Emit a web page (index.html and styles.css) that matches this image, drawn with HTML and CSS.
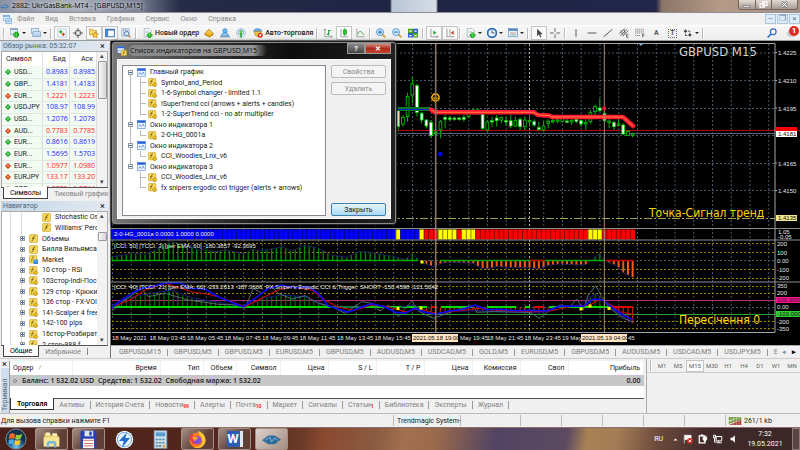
FILE: index.html
```html
<!DOCTYPE html>
<html lang="ru">
<head>
<meta charset="utf-8">
<title>2882: UkrGasBank-MT4 - [GBPUSD,M15]</title>
<link rel="stylesheet" href="styles.css">
</head>
<body>
<svg class="sprite" aria-hidden="true">
  <symbol id="fx" viewBox="0 0 16 16"><rect x="1" y="1" width="14" height="14" rx="1" fill="#f6d95c" stroke="#c59a1e"/><path d="M11 4c-3-1-3 1-3.500 4S6 12.500 4.500 12M5.500 7.500h4.500" fill="none" stroke="#6b4d00" stroke-width="1.500"/></symbol>
  <symbol id="fxc" viewBox="0 0 16 16"><rect x="1" y="1" width="13" height="13" rx="1" fill="#f6d95c" stroke="#c59a1e"/><path d="M9 3.500c-3-1-3 1-3.500 4S4.500 11 3.500 11M4 6.500h4" fill="none" stroke="#6b4d00" stroke-width="1.200"/><path d="M12 8l4 4-4 4-4-4z" fill="#f0c020" stroke="#8b6800"/></symbol>
  <symbol id="fxm" viewBox="0 0 16 16"><rect x="1" y="1" width="13" height="13" rx="1" fill="#f6d95c" stroke="#c59a1e"/><path d="M9 3.500c-3-1-3 1-3.500 4S4.500 11 3.500 11" fill="none" stroke="#6b4d00" stroke-width="1.200"/><path d="M8 8h8v8H8z" fill="#2f86e8"/><path d="M10 10c1 2 3 2 4 0" stroke="#fff" fill="none"/></symbol>
  <symbol id="win" viewBox="0 0 16 16"><rect x="1" y="1" width="14" height="14" fill="#f4f9ff" stroke="#3c78dc"/><path d="M1 1h14v4H1z" fill="#2b62d9"/><path d="M3 12l2-4 3 4 3-5 2 5" fill="none" stroke="#4c88e4" stroke-width="1.300"/></symbol>
  <symbol id="up" viewBox="0 0 10 10"><path d="M5 0l5 5-5 5-5-5z" fill="#16992b"/><path d="M5 2l2.500 2.500L5 7 2.500 4.500z" fill="#6ce070"/></symbol>
  <symbol id="down" viewBox="0 0 10 10"><path d="M5 0l5 5-5 5-5-5z" fill="#cf3b12"/><path d="M5 2l2.500 2.500L5 7 2.500 4.500z" fill="#ff9a58"/></symbol>
  <symbol id="newchart" viewBox="0 0 16 16"><rect x="1" y="1" width="11" height="9" fill="#e8f2fb" stroke="#7d9bb8"/><path d="M1 2h11" stroke="#7d9bb8" stroke-width="2"/><path d="M10 6v9M5.500 10.500h9" stroke="#108a10" stroke-width="5"/><path d="M10 7v7M6.500 10.500h7" stroke="#3ed43e" stroke-width="2.500"/></symbol>
  <symbol id="profiles" viewBox="0 0 16 16"><rect x="1" y="1" width="11" height="8" fill="#d7e9f9" stroke="#6d93b8"/><rect x="3" y="6" width="12" height="8" fill="#b7d4ee" stroke="#6d93b8"/><path d="M4 8h10" stroke="#fff"/></symbol>
  <symbol id="watch" viewBox="0 0 16 16"><rect x="1.500" y="1.500" width="13" height="13" fill="#fdfefe" stroke="#8bb4d8"/><path d="M6 3l3 3-3 3-3-3z" fill="#28a838"/><path d="M10 7l3 3-3 3-3-3z" fill="#dd4b20"/></symbol>
  <symbol id="cross" viewBox="0 0 16 16"><circle cx="8" cy="8" r="4.500" fill="none" stroke="#555" stroke-width="1.500"/><path d="M8 0v6M8 10v6M0 8h6M10 8h6" stroke="#555" stroke-width="1.500"/></symbol>
  <symbol id="nav" viewBox="0 0 16 16"><path d="M1 2h5l1 2h5v7H1z" fill="#f6d878" stroke="#b98d20"/><path d="M10 6l1.500 3.300 3.500.4-2.600 2.400.7 3.500L10 14l-3.100 1.600.7-3.500L5 9.700l3.500-.4z" fill="#ffcf2e" stroke="#b07d08"/></symbol>
  <symbol id="term" viewBox="0 0 16 16"><rect x="1" y="2" width="14" height="12" fill="#fff" stroke="#2f6bb8" stroke-width="1.500"/><path d="M1 3h14" stroke="#2f6bb8" stroke-width="2"/><path d="M3 3v11" stroke="#4485d6" stroke-width="4"/></symbol>
  <symbol id="tester" viewBox="0 0 16 16"><path d="M1 1h12v12H1z" fill="#e6eef8" stroke="#8ca4c4"/><path d="M2 4h10M4 1v12M8 1v12" stroke="#8ca4c4"/><circle cx="9" cy="9" r="3.500" fill="#d5ebfb" stroke="#4d7cad" stroke-width="1.500"/><path d="M12 12l3 3" stroke="#b77a26" stroke-width="2"/></symbol>
  <symbol id="order" viewBox="0 0 16 16"><path d="M2 1h8l3 3v10H2z" fill="#fff" stroke="#879bb0"/><path d="M4 5h6M4 7.500h4" stroke="#9aa"/><path d="M10.500 7v9M6 11.500h9" stroke="#0f8f17" stroke-width="4"/><path d="M10.500 8v7M7 11.500h7" stroke="#42d746" stroke-width="2"/></symbol>
  <symbol id="gold" viewBox="0 0 16 16"><path d="M1 9l7-7 7 7-6 5z" fill="#f2b727" stroke="#9f6b07"/><path d="M1 9l7 4 7-4v2l-6 4-8-4z" fill="#c7830c"/><path d="M5 8l3-3 3 3" stroke="#ffe58a" fill="none"/></symbol>
  <symbol id="people" viewBox="0 0 16 16"><circle cx="8" cy="4.500" r="3.500" fill="#6db6ee" stroke="#2d7dc0"/><path d="M2 13c0-7 12-7 12 0z" fill="#8cc8f4" stroke="#2d7dc0"/><path d="M0 14h16" stroke="#7898b5" stroke-width="2"/></symbol>
  <symbol id="signal" viewBox="0 0 16 16"><circle cx="8" cy="8" r="7" fill="none" stroke="#a7c3d8" stroke-width="1.500"/><circle cx="8" cy="7" r="4" fill="none" stroke="#5d9acb" stroke-width="1.500"/><path d="M8 6v9" stroke="#27a32c" stroke-width="2.500"/><circle cx="8" cy="6" r="2" fill="#52c948"/></symbol>
  <symbol id="auto" viewBox="0 0 16 16"><path d="M1 5c1-5 12-5 13 0l-4 1H5z" fill="#66aee8" stroke="#337cb9"/><path d="M2 6l11-1-1 6c-2 4-6 3-8 1z" fill="#f3c84b" stroke="#a77919"/><circle cx="11.500" cy="11.500" r="4" fill="#d92a14"/><path d="M10 10h3v3h-3z" fill="#fff"/></symbol>
  <symbol id="bars" viewBox="0 0 16 16"><path d="M3 1v13h12M1 3h4M13 12v4" fill="none" stroke="#777"/><path d="M9 3v9M9 4h3M6 10h3" stroke="#1b9b29" stroke-width="1.700"/></symbol>
  <symbol id="candle" viewBox="0 0 16 16"><path d="M3 1v13h12" fill="none" stroke="#777"/><path d="M9 0v13" stroke="#128c20"/><path d="M7 3h5v7H7z" fill="#28c53a" stroke="#128c20"/></symbol>
  <symbol id="line" viewBox="0 0 16 16"><path d="M3 1v13h12" fill="none" stroke="#777"/><path d="M4 10c3-7 6-5 10 1" fill="none" stroke="#20a030" stroke-width="1.300"/></symbol>
  <symbol id="zin" viewBox="0 0 16 16"><path d="M9 9l6 6" stroke="#d5a431" stroke-width="3"/><circle cx="6.500" cy="6.500" r="5.500" fill="#d8effd" stroke="#4b90cf" stroke-width="1.500"/><path d="M3.500 6.500h6M6.500 3.500v6" stroke="#256db2" stroke-width="1.800"/></symbol>
  <symbol id="zout" viewBox="0 0 16 16"><path d="M9 9l6 6" stroke="#d5a431" stroke-width="3"/><circle cx="6.500" cy="6.500" r="5.500" fill="#d8effd" stroke="#4b90cf" stroke-width="1.500"/><path d="M3.500 6.500h6" stroke="#256db2" stroke-width="1.800"/></symbol>
  <symbol id="tiles" viewBox="0 0 16 16"><path d="M0 1h8v7H0zM8 8h8v7H8z" fill="#49a51e"/><path d="M8 1h8v7H8zM0 8h8v7H0z" fill="#2e5fc9"/><path d="M2 4h4v2H2zM10 4h4v2h-4zM2 11h4v2H2zM10 11h4v2h-4z" fill="#fff"/></symbol>
  <symbol id="scroll" viewBox="0 0 16 16"><path d="M3 1v13h12M13 12v4" fill="none" stroke="#666"/><path d="M7 4l5 3.500L7 11z" fill="#25a536"/></symbol>
  <symbol id="shift" viewBox="0 0 16 16"><path d="M3 1v13h12M8 2v10" fill="none" stroke="#666"/><path d="M14 4L9 7.500l5 3.500z" fill="#c6532c"/></symbol>
  <symbol id="clock" viewBox="0 0 16 16"><circle cx="8" cy="8" r="7" fill="#e9f5ff" stroke="#2366b5" stroke-width="2.500"/><path d="M8 4v4h4" fill="none" stroke="#333" stroke-width="1.300"/></symbol>
  <symbol id="tpl" viewBox="0 0 16 16"><rect x="1" y="1" width="14" height="13" fill="#e9f5ff" stroke="#4d85bd"/><path d="M1 3h14" stroke="#4d85bd" stroke-width="3"/><path d="M3 9l3-2 3 2 4-3" stroke="#c44" fill="none"/><path d="M3 12l3-2 3 2 4-2" stroke="#2a9a38" fill="none"/></symbol>
  <symbol id="cursor" viewBox="0 0 16 16"><path d="M5 1v12l3-3 2 5 2-1-2-4h4z" fill="#444"/></symbol>
  <symbol id="plus" viewBox="0 0 16 16"><path d="M8 0v6M8 10v6M0 8h6M10 8h6" stroke="#555" stroke-width="1.400"/></symbol>
  <symbol id="vl" viewBox="0 0 16 16"><path d="M8 2v12" stroke="#444" stroke-width="1.400"/></symbol>
  <symbol id="hl" viewBox="0 0 16 16"><path d="M1 8h14" stroke="#444" stroke-width="1.400"/></symbol>
  <symbol id="tl" viewBox="0 0 16 16"><path d="M1 14L15 2" stroke="#444" stroke-width="1.400"/></symbol>
  <symbol id="chan" viewBox="0 0 16 16"><path d="M0 9L9 1M2 12L13 2M6 13l9-9M3 4l4 8M8 2l2 8" stroke="#444" stroke-width="1.200"/><path d="M15 10h-3v5h3M12 12.500h3" fill="none" stroke="#444"/></symbol>
  <symbol id="fibo" viewBox="0 0 16 16"><path d="M0 2h14M0 5h14M0 8h14M0 12h9" stroke="#444" stroke-dasharray="2 1"/><path d="M15 10h-3v5M12 12.500h3" fill="none" stroke="#444"/></symbol>
  <symbol id="arrows" viewBox="0 0 16 16"><path d="M4 2l3 3-3 3-3-3z M11 8l3 3-3 3-3-3z" fill="#444"/><path d="M8 5h3v2M4 9v3h3" fill="none" stroke="#444" stroke-width="1.400"/></symbol>
  <symbol id="find" viewBox="0 0 16 16"><circle cx="10" cy="6" r="4.500" fill="#fff" stroke="#356bc8" stroke-width="2"/><path d="M6.500 9.500L1 15" stroke="#356bc8" stroke-width="2.500"/></symbol>
</svg>

<header class="titlebar">
  <svg class="logo" viewBox="0 0 16 8"><path d="M0 5l5-4h8l3 3-4 3H3z" fill="#3f78a8"/><path d="M3 5l4-3 2 3 4-2" fill="none" stroke="#d5e8f5"/></svg>
  <h1 class="title">2882: UkrGasBank-MT4 - [GBPUSD,M15]</h1>
  <div class="wbtns"><button aria-label="Свернуть"><svg viewBox="0 0 10 8"><path d="M1 5h8v2H1z" fill="#fff" stroke="#445" stroke-width=".600"/></svg></button><button aria-label="Развернуть"><svg viewBox="0 0 10 8"><path d="M4 1h5v4H4zM1 3h5v4H1z" fill="none" stroke="#fff" stroke-width="1.400"/></svg></button><button class="x" aria-label="Закрыть окно"><svg viewBox="0 0 10 8"><path d="M2 1l6 6M8 1L2 7" stroke="#445" stroke-width="2.600"/><path d="M2 1l6 6M8 1L2 7" stroke="#fff" stroke-width="1.600"/></svg></button></div>
</header>

<nav class="menubar">
  <svg class="ic" viewBox="0 0 16 16"><rect x="1" y="1" width="11" height="9" fill="#e9f4ff" stroke="#5e9ad8"/><path d="M1 2h11" stroke="#5e9ad8" stroke-width="2"/><rect x="5" y="6" width="10" height="9" fill="#cfe4f8" stroke="#5e9ad8"/><path d="M6 13l3-4 2 3 3-4" stroke="#3d7fc8" fill="none"/></svg>
  <button>Файл</button><button>Вид</button><button>Вставка</button><button>Графики</button><button>Сервис</button><button>Окно</button><button>Справка</button>
  <div class="mdi"><button aria-label="Свернуть график">–</button><button aria-label="Восстановить график">❐</button><button aria-label="Закрыть график">×</button></div>
</nav>

<div class="toolbar" role="toolbar">
  <i class="grip"></i>
  <button class="drop" aria-label="Новый график"><svg><use href="#newchart"/></svg></button>
  <button class="drop" aria-label="Профили"><svg><use href="#profiles"/></svg></button>
  <i class="grip"></i>
  <button class="on" aria-label="Обзор рынка"><svg><use href="#watch"/></svg></button>
  <button aria-label="Окно данных"><svg><use href="#cross"/></svg></button>
  <button class="on" aria-label="Навигатор"><svg><use href="#nav"/></svg></button>
  <button class="on" aria-label="Терминал"><svg><use href="#term"/></svg></button>
  <button aria-label="Тестер"><svg><use href="#tester"/></svg></button>
  <i class="grip"></i>
  <button class="wide"><svg><use href="#order"/></svg>Новый ордер</button>
  <button aria-label="Редактор"><svg><use href="#gold"/></svg></button>
  <button aria-label="Сообщество"><svg><use href="#people"/></svg></button>
  <button aria-label="Сигналы"><svg><use href="#signal"/></svg></button>
  <button class="wide"><svg><use href="#auto"/></svg>Авто-торговля</button>
  <i class="grip"></i>
  <button aria-label="Бары"><svg><use href="#bars"/></svg></button>
  <button class="on" aria-label="Свечи"><svg><use href="#candle"/></svg></button>
  <button aria-label="Линия"><svg><use href="#line"/></svg></button>
  <i class="grip"></i>
  <button aria-label="Приблизить"><svg><use href="#zin"/></svg></button>
  <button aria-label="Отдалить"><svg><use href="#zout"/></svg></button>
  <button aria-label="Плитка"><svg><use href="#tiles"/></svg></button>
  <i class="grip"></i>
  <button class="on" aria-label="Автопрокрутка"><svg><use href="#scroll"/></svg></button>
  <button class="on" aria-label="Сдвиг графика"><svg><use href="#shift"/></svg></button>
  <i class="grip"></i>
  <button class="drop" aria-label="Индикаторы"><svg><use href="#order"/></svg></button>
  <button class="drop" aria-label="Периоды"><svg><use href="#clock"/></svg></button>
  <button class="drop" aria-label="Шаблоны"><svg><use href="#tpl"/></svg></button>
  <i class="grip"></i>
  <button class="on" aria-label="Курсор"><svg><use href="#cursor"/></svg></button>
  <button aria-label="Перекрестие"><svg><use href="#plus"/></svg></button>
  <i class="grip"></i>
  <button aria-label="Вертикальная линия"><svg><use href="#vl"/></svg></button>
  <button aria-label="Горизонтальная линия"><svg><use href="#hl"/></svg></button>
  <button aria-label="Трендовая линия"><svg><use href="#tl"/></svg></button>
  <button aria-label="Канал"><svg><use href="#chan"/></svg></button>
  <button aria-label="Фибоначчи"><svg><use href="#fibo"/></svg></button>
  <button class="letter">A</button>
  <button class="letter"><span class="tbox">T</span></button>
  <button class="drop" aria-label="Стрелки"><svg><use href="#arrows"/></svg></button>
  <i class="grip"></i>
  <div class="right"><button aria-label="Поиск"><svg><use href="#find"/></svg></button><button class="mail" aria-label="Сообщения"><span class="badge">1</span></button></div>
</div>

<main class="main">
  <aside class="side">
    <section class="panel">
      <h2 class="ptitle">Обзор рынка: 05:32:07<button aria-label="Закрыть обзор рынка">×</button></h2>
      <div class="pbody market">
        <div class="clip">
          <table>
            <thead><tr><th>Символ</th><th>Бид</th><th>Аск</th></tr></thead>
            <tbody>
              <tr class="u"><td><svg><use href="#up"/></svg>USD...</td><td>0.8983</td><td>0.8985</td></tr>
              <tr class="u"><td><svg><use href="#up"/></svg>GBP...</td><td>1.4181</td><td>1.4183</td></tr>
              <tr class="d"><td><svg><use href="#down"/></svg>EUR...</td><td>1.2221</td><td>1.2223</td></tr>
              <tr class="u"><td><svg><use href="#up"/></svg>USDJPY</td><td>108.97</td><td>108.99</td></tr>
              <tr class="u"><td><svg><use href="#up"/></svg>USD...</td><td>1.2076</td><td>1.2078</td></tr>
              <tr class="d"><td><svg><use href="#down"/></svg>AUD...</td><td>0.7783</td><td>0.7785</td></tr>
              <tr class="u"><td><svg><use href="#up"/></svg>EUR...</td><td>0.8616</td><td>0.8619</td></tr>
              <tr class="u"><td><svg><use href="#up"/></svg>EUR...</td><td>1.5695</td><td>1.5703</td></tr>
              <tr class="d"><td><svg><use href="#down"/></svg>EUR...</td><td>1.0977</td><td>1.0980</td></tr>
              <tr class="d"><td><svg><use href="#down"/></svg>EURJPY</td><td>133.17</td><td>133.20</td></tr>
              <tr class="d"><td><svg><use href="#down"/></svg>GBP...</td><td>1.2739</td><td>1.2744</td></tr>
            </tbody>
          </table>
        </div>
        <div class="sbar"><span>▴</span><b class="thumb long"></b><span class="end">▾</span></div>
      </div>
      <div class="ptabs"><button class="act">Символы</button><button>Тиковый график</button></div>
    </section>
    <section class="panel navi">
      <h2 class="ptitle">Навигатор<button aria-label="Закрыть навигатор">×</button></h2>
      <div class="pbody">
        <div class="clip">
          <ul class="navtree">
            <li class="deep"><svg><use href="#fx"/></svg>Stochastic Os</li>
            <li class="deep"><svg><use href="#fx"/></svg>Williams' Perc</li>
            <li><i class="exp"></i><svg><use href="#fx"/></svg>Объемы</li>
            <li><i class="exp"></i><svg><use href="#fx"/></svg>Билла Вильямса</li>
            <li><i class="exp"></i><svg><use href="#fxm"/></svg>Market</li>
            <li><i class="exp"></i><svg><use href="#fxc"/></svg>10 стор - RSI</li>
            <li><i class="exp"></i><svg><use href="#fxc"/></svg>103стор-Indi-Пос</li>
            <li><i class="exp"></i><svg><use href="#fxc"/></svg>129 стор - Крюки</li>
            <li><i class="exp"></i><svg><use href="#fxc"/></svg>136 стор - FX-VOI</li>
            <li><i class="exp"></i><svg><use href="#fxc"/></svg>141-Scalper 4 free</li>
            <li><i class="exp"></i><svg><use href="#fxc"/></svg>142-100 pips</li>
            <li><i class="exp"></i><svg><use href="#fxc"/></svg>16стор-Розбират</li>
            <li><i class="exp"></i><svg><use href="#fxc"/></svg>2 стор-888 f</li>
          </ul>
        </div>
        <div class="sbar"><span>▴</span><b class="thumb low"></b><span class="end">▾</span></div>
      </div>
      <div class="ptabs"><button class="act">Общие</button><button>Избранное</button><i class="sep"></i></div>
    </section>
  </aside>

  <section class="charts">
    <svg id="chart" class="chart" viewBox="111 41 689 304" preserveAspectRatio="xMinYMin meet" role="img" aria-label="GBPUSD M15">
      <g id="grid"></g><g id="plot"></g>
      <g class="frame"><path d="M112 43.500H775V332.500H112"/><path class="thick" d="M111 228.500H800M111 240H800M111 282H800"/></g>
      <path d="M638 43h6l-3 3z" fill="#8fa6c6"/>
      <g class="big"><text class="sym" x="679" y="56">GBPUSD M15</text><text x="649" y="217">Точка-Сигнал тренд</text><text x="679" y="324">Пересічення 0</text></g>
      <g class="cap"><text x="114" y="236">2-0-HG_0001a 0.0000 1.0000 0.0000</text><text x="114" y="248">[CCI: 50] [TCCI: 3] [per EMA: 60] -180.3857 -92.3695</text><text x="114" y="289">[CCI: 40] [TCCI: 21] [per EMA: 60] -233.2613 -187.3606  FX Sniper's Ergodic CCI &amp; Trigger: SHORT -150.4598 -121.5042</text></g>
      <g class="scale" id="scale"></g>
    </svg>
    <div class="ctabs">
      <button>GBPUSD,M15</button><button>GBPUSD,M5</button><button>GBPUSD,M5</button><button>EURUSD,M5</button><button>GBPUSD,M5</button><button>AUDUSD,M5</button><button>USDCAD,M5</button><button>GOLD,M5</button><button>EURUSD,M5</button><button>GBPUSD,M5</button><button>AUDUSD,M5</button><button>USDCAD,M5</button><button>USDJPY,M5</button><button class="cut">E</button>
      <span class="scr"><i>◂</i><b>▸</b></span>
    </div>
  </section>
</main>

<section class="terminal">
  <div class="vstrip"><button aria-label="Закрыть терминал">×</button><span>Терминал</span></div>
  <div class="tmain">
    <table>
      <colgroup><col class="c1"><col class="c2"><col class="c3"><col class="c4"><col class="c5"><col class="c6"><col class="c6"><col class="c6"><col class="c6"><col class="c6"><col class="c6"><col></colgroup>
      <thead><tr><th class="l">Ордер <span class="slash">⁄</span></th><th>Время</th><th>Тип</th><th>Объем</th><th>Символ</th><th>Цена</th><th>S / L</th><th>T / P</th><th>Цена</th><th>Комиссия</th><th>Своп</th><th>Прибыль</th></tr></thead>
      <tbody><tr><td colspan="11" class="l"><i class="dot"></i>Баланс: 1 532.02 USD&nbsp; Средства: 1 532.02&nbsp; Свободная маржа: 1 532.02</td><td>0.00</td></tr></tbody>
    </table>
    <div class="ttabs"><button class="act">Торговля</button><button>Активы</button><button>История Счета</button><button>Новости<sub>99</sub></button><button>Алерты</button><button>Почта<sub>10</sub></button><button>Маркет</button><button>Сигналы</button><button>Статьи<sub>1</sub></button><button>Библиотека</button><button>Эксперты</button><button>Журнал</button></div>
  </div>
  <div class="frames"><div class="frow"><i class="grip"></i><button>M1</button><button>M5</button><button class="on">M15</button><button>M30</button><button>H1</button><button>H4</button><button>D1</button><button>W1</button><button>MN</button></div></div>
</section>

<footer class="status">
  <span class="help">Для вызова справки нажмите F1</span><span class="s1">Trendmagic System-</span><span class="s2"></span><span class="s3"></span><span class="s3"></span><span class="s3"></span><span class="s3"></span><span class="s3"></span>
  <span class="conn"><svg viewBox="0 0 14 9"><path d="M0 5L14 0v3L0 8z" fill="#6f9a3b"/><path d="M0 0h14L0 4z" fill="#6f9a3b"/><path d="M0 9L14 3v6z" fill="#b13a30"/><path d="M2.500 0v9M5.500 0v9M8.500 0v9M11.500 0v9" stroke="#f0f0f0" stroke-width=".500"/></svg>261/1 kb</span>
</footer>

<footer class="taskbar">
  <button class="orb" aria-label="Пуск"><svg viewBox="0 0 24 24"><defs><radialGradient id="og" cy=".9"><stop offset="0" stop-color="#6fd3f4"/><stop offset=".600" stop-color="#276796"/><stop offset="1" stop-color="#14324f"/></radialGradient></defs><circle cx="12" cy="12" r="11" fill="url(#og)" stroke="#7e93a0"/><path d="M5 7c3-2 4-1 6 0l-1 5c-2-1-4-1-6 0z" fill="#ef6a2b"/><path d="M12 7c2 1 4 1 7-1l-2 6c-2 1-4 1-6 0z" fill="#8cc63f"/><path d="M4 13c2-1 4-1 6 0l-1 5c-2-1-3-1-5 0z" fill="#4aa8e8"/><path d="M11 13c2 1 4 1 6 0l-1 5c-2 1-4 1-6 0z" fill="#fbc72e"/></svg></button>
  <button class="task" aria-label="Проводник"><svg viewBox="0 0 24 24"><path d="M3 4h7l2 3h9v13H3z" fill="#e8c75c"/><path d="M5 3h5v4H5zM13 4h6v4h-6z" fill="#fdf3c0"/><path d="M2 9h20v12H2z" fill="#f8e596"/><path d="M6 22v-6c0-3 12-3 12 0v6h-3v-5H9v5z" fill="#72b7e0"/></svg></button>
  <button class="task" aria-label="Сохранение"><svg viewBox="0 0 24 24"><path d="M2 1h20v22H2z" fill="#2442b4"/><path d="M7 1h11v7H7z" fill="#dfe6f3"/><path d="M13 2h3v5h-3z" fill="#2442b4"/><path d="M5 11h14v12H5z" fill="#fff"/><path d="M5 13h14M6 17h12M6 20h12" stroke="#d0524a"/></svg></button>
  <button class="task plain" aria-label="DAEMON"><svg viewBox="0 0 24 24"><circle cx="12" cy="12" r="11" fill="#f3f8fc"/><circle cx="12" cy="12" r="9" fill="#eaf4fc" stroke="#4a92d6"/><path d="M15 3L5 14h6l-2 8 10-12h-6z" fill="#1f6fd0"/></svg></button>
  <button class="task plain" aria-label="Калькулятор"><svg viewBox="0 0 24 24"><rect x="4" y="1" width="16" height="22" fill="#cbe1ef" stroke="#7fa6c0"/><path d="M6 3h12v5H6z" fill="#5b9bd0"/><path d="M6 12h12M6 16h12M6 20h8" stroke="#5d87a5" stroke-width="2" stroke-dasharray="3 1"/><path d="M15 19h3v3h-3z" fill="#e49a32"/></svg></button>
  <button class="task" aria-label="Firefox"><svg viewBox="0 0 24 24"><circle cx="12" cy="13" r="10" fill="#ff7a1f"/><path d="M13 1c6 3 10 7 9 14-3 8-11 9-15 6 8 2 12-3 11-9-1-4-5-6-5-11z" fill="#ffca36"/><path d="M2 8l3-4 2 4 5 1c4 2 3 8-1 9-5 1-8-3-9-10z" fill="#f0394b"/><circle cx="12" cy="13" r="5" fill="#8050d8"/><path d="M5 9c4-2 7 0 8 2-3 0-3 3-5 3z" fill="#ffa02c"/></svg></button>
  <button class="task" aria-label="Word"><span class="word">W</span></button>
  <button class="task lit" aria-label="MetaTrader 4"><svg viewBox="0 0 24 24"><path d="M0 13l8-6h8l8 5-8 6H8z" fill="#2e6c9c"/><path d="M4 13l6-4 2 6 4-5 4 3" fill="none" stroke="#9ec4dc"/></svg></button>
  <div class="tray">
    <span class="lang">RU</span>
    <svg viewBox="0 0 10 10"><path d="M1 7l4-4 4 4z" fill="#fff"/></svg>
    <svg class="t" viewBox="0 0 16 16"><path d="M2 1v14M3 2h10v7H3z" stroke="#fff" fill="#fff"/><circle cx="11" cy="11" r="4.500" fill="#d82a1c"/><path d="M9 9l4 4M13 9l-4 4" stroke="#fff" stroke-width="1.500"/></svg>
    <svg class="t" viewBox="0 0 16 16"><path d="M2 3h9v11H2z" fill="none" stroke="#fff" stroke-width="2"/><path d="M5 1h3v2H5zM8 5h6v4l-3 3-3-3zM9 3v2M13 3v2M11 12v3" fill="#fff" stroke="#fff"/></svg>
    <svg class="t" viewBox="0 0 16 16"><path d="M5 4h9v7H5zM9 11v3M6 14h8M1 2h3v4H1zM2.500 6v7h3" fill="none" stroke="#fff" stroke-width="1.600"/></svg>
    <svg class="t" viewBox="0 0 16 16"><path d="M4 6h3l4-4v12L7 10H4z" fill="#fff"/></svg>
    <time class="clock">7:32<br>19.05.2021</time>
    <button class="desk" aria-label="Показать рабочий стол"></button>
  </div>
</footer>

<div class="dialog" role="dialog" aria-labelledby="dt">
  <header class="dhead"><svg class="ic" viewBox="0 0 16 16"><use href="#win" width="12" height="12"/><use href="#fx" x="6" y="6" width="10" height="10"/></svg><h2 id="dt">Список индикаторов на GBPUSD,M15</h2><button class="q" aria-label="Справка">?</button><button class="dx" aria-label="Закрыть диалог">✕</button></header>
  <div class="dbody">
    <ul class="tree">
      <li class="root"><i class="exp minus"></i><svg><use href="#win"/></svg>Главный график</li>
      <li><svg><use href="#fxc"/></svg>Symbol_and_Period</li>
      <li><svg><use href="#fxc"/></svg>1-6-Symbol changer - limited 1.1</li>
      <li><svg><use href="#fxc"/></svg>!SuperTrend cci (arrows + alerts + candles)</li>
      <li class="last"><svg><use href="#fxc"/></svg>1-2-SuperTrend cci - no atr multiplier</li>
      <li class="root"><i class="exp minus"></i><svg><use href="#win"/></svg>Окно индикатора 1</li>
      <li class="last"><svg><use href="#fxc"/></svg>2-0-HG_0001a</li>
      <li class="root"><i class="exp minus"></i><svg><use href="#win"/></svg>Окно индикатора 2</li>
      <li class="last"><svg><use href="#fxc"/></svg>CCI_Woodies_Lnx_v6</li>
      <li class="root"><i class="exp minus"></i><svg><use href="#win"/></svg>Окно индикатора 3</li>
      <li><svg><use href="#fxc"/></svg>CCI_Woodies_Lnx_v6</li>
      <li class="last"><svg><use href="#fxc"/></svg>fx snipers ergodic cci trigger (alerts + arrows)</li>
    </ul>
    <div class="dbtns"><button disabled>Свойства</button><button disabled>Удалить</button><button class="def">Закрыть</button></div>
  </div>
</div>
<script src="chart.js"></script>
</body>
</html>
```
FILE: styles.css
```css
* { box-sizing: border-box; }
body { margin: 0; height: 100vh; min-height: 450px; display: flex; flex-direction: column; position: relative; overflow: hidden; background: #f0f0f0; color: #1a1a1a; font: 7px/10px Roboto, "Noto Sans", sans-serif; }
button { font: inherit; color: inherit; background: none; border: 0; padding: 0; margin: 0; display: flex; align-items: center; justify-content: center; white-space: nowrap; }
h1, h2, ul { margin: 0; padding: 0; font: inherit; list-style: none; }
i, b { font-style: normal; }
.sprite { position: absolute; width: 0; height: 0; }
table { border-collapse: collapse; table-layout: fixed; width: 100%; }
th, td { padding: 0; font-weight: 400; white-space: nowrap; overflow: hidden; }

.titlebar { height: 13px; display: flex; align-items: center; gap: 3px; background: linear-gradient(90deg, #8b93a5 0, #a3a9b7 80px, #747b8e 140px, #262b47 180px, #1e2442 384px, #1e2442 390px, #b9c5d5 392px, #d5dce6 436px, #1e2442 438px, #22264a 656px, #8c7468 662px, #b59a86 720px, #a49386 100%); border-bottom: 1px solid #8d8f99; }
.logo { width: 9px; height: 5px; }
.title { color: #000; font-family: "Open Sans", sans-serif; text-shadow: 0 0 4px #fff, 0 0 6px #dde; }
.wbtns { margin-left: auto; display: flex; align-self: flex-start; height: 10px; width: 60px; margin-right: 2px; border: 1px solid #75675f; border-top: 0; border-radius: 0 0 3px 3px; background: linear-gradient(#e3dbd4, #a79990); }
.wbtns button { flex: 1; border-right: 1px solid #75675f; }
.wbtns .x { flex: 1.6; border: 0; }
.wbtns svg { width: 9px; height: 7px; }

.menubar { height: 12px; display: flex; align-items: center; gap: 11px; padding-left: 3px; color: #8a8a8a; background: #f1f1f1; }
.menubar .ic { width: 9px; height: 9px; margin-right: -6px; }
.mdi { margin-left: auto; display: flex; gap: 1px; color: #557fa8; }
.mdi button { width: 11px; height: 10px; border: 1px solid #a9c4dc; background: #dfecf7; font-size: 8px; }

.toolbar { height: 16px; display: flex; align-items: center; background: linear-gradient(#f7f7f7, #ededed); border-top: 1px solid #fff; border-bottom: 1px solid #9c9c9c; padding-left: 2px; }
.toolbar button { width: 16px; height: 14px; flex: none; }
.toolbar button.on { background: #fafafa; border: 1px solid #c4c4c4; }
.toolbar svg { width: 10px; height: 10px; flex: none; }
.toolbar .drop { width: 21px; gap: 2px; }
.drop::after { content: ""; border: 2px solid transparent; border-top-color: #222; border-bottom: 0; }
.toolbar .wide { width: auto; gap: 2px; padding: 0 2px 0 4px; font-weight: 500; }
.grip { flex: none; width: 2px; height: 11px; margin: 0 2px 0 1px; border-left: 1px solid #bbb; border-right: 1px solid #fff; }
.toolbar .letter { font-weight: 700; color: #555; }
.tbox { border: 1px dotted #666; padding: 0 1px; line-height: 7px; }
.right { margin-left: auto; display: flex; gap: 3px; padding-right: 1px; }
.mail { position: relative; }
.mail::before { content: ""; width: 9px; height: 7px; border-radius: 4px; background: #ccc; }
.badge { position: absolute; right: 0; top: 0; width: 10px; height: 10px; border-radius: 5px; background: #dd2c1d; color: #fff; font-size: 8px; font-weight: 700; line-height: 10px; }

.main { flex: 1; min-height: 0; display: grid; grid-template-columns: 111px minmax(0, 1fr); }
.side { display: flex; flex-direction: column; gap: 2px; padding: 0 2px 1px 1px; border-right: 1px solid #777; min-height: 0; }
.panel { height: 158px; display: flex; flex-direction: column; }
.panel.navi { height: auto; flex: 1; min-height: 0; }
.ptitle { height: 10px; display: flex; justify-content: space-between; padding: 0 2px; line-height: 10px; color: #4d6378; background: linear-gradient(90deg, #c3d6e8, #e2e9f0); }
.ptitle button { color: #000; width: 7px; height: 9px; font-size: 9px; }
.pbody { flex: 1; min-height: 0; display: flex; background: #fff; border: 1px solid #aaa; border-bottom: 0; }
.clip { flex: 1; min-width: 0; overflow: hidden; }
.market th { height: 14px; background: #fff; text-align: right; padding-right: 3px; border-right: 1px solid #e2e2e2; }
.market th:first-child { width: 40px; text-align: left; padding-left: 4px; }
.market tbody tr { height: 12px; background: #f1fbf1; }
.market tbody tr:nth-child(3n) { height: 11px; }
.market td { text-align: right; padding: 0 1px 0 0; line-height: 10px; border-right: 1px solid #ddd; border-bottom: 1px solid #e2e8e2; }
.market td:first-child { text-align: left; padding-left: 3px; }
.market td svg { width: 6px; height: 6px; margin-right: 3px; vertical-align: -1px; }
.market .u td + td { color: #1c1cff; }
.market .d td + td { color: #ff2020; }
.market td + td { font-family: "Open Sans", sans-serif; }
.sbar { width: 10px; display: flex; flex-direction: column; align-items: center; background: #f2f2f2; color: #444; }
.sbar span { height: 9px; line-height: 9px; }
.sbar .end { margin-top: auto; }
.thumb { width: 9px; height: 38px; border: 1px solid #9a9a9a; border-radius: 1px; background: linear-gradient(90deg, #f8f8f8, #d4d4d4); }
.thumb.low { height: 9px; margin-top: 11px; }
.ptabs { height: 12px; display: flex; align-items: stretch; gap: 6px; border-top: 1px solid #555; padding-left: 2px; color: #808080; }
.ptabs .act { color: #000; background: #fff; border: 1px solid #444; border-top: 0; padding: 0 6px; margin-top: -1px; }
.sep { border-right: 1px solid #888; margin: 2px 0; }
.navtree { height: 138px; display: grid; grid-auto-rows: 1fr; background: repeating-linear-gradient(90deg, transparent 0 8px, #ddd 8px 9px, transparent 9px 11px) 0 0 / 28px 100% no-repeat; }
.navtree li, .tree li { display: flex; align-items: center; gap: 4px; white-space: nowrap; }
.navtree li { padding-left: 18px; }
.navtree .deep { padding-left: 40px; }
.navtree svg, .tree svg { width: 9px; height: 9px; flex: none; }
.exp { width: 5px; height: 5px; border: 1px solid #999; flex: none; background: linear-gradient(#36a, #36a) 50% 50% / 3px 1px no-repeat, linear-gradient(#36a, #36a) 50% 50% / 1px 3px no-repeat, #fff; }
.exp.minus { background: linear-gradient(#36a, #36a) 50% 50% / 3px 1px no-repeat, #fff; }

.charts { background: #000; display: flex; flex-direction: column; justify-content: space-between; min-height: 0; min-width: 0; }
.chart { width: 100%; display: block; min-height: 0; flex: 1; }
.frame path { fill: none; stroke: #a5a5a5; stroke-width: 1; }
.frame .thick { stroke: #8c8c8c; stroke-width: 1; }
.big text { fill: #ffd500; font: 12px "DejaVu Sans Condensed", sans-serif; }
.big .sym { fill: #cfd3d8; font-size: 13px; }
.cap text { fill: #eee; font: 6px "Liberation Sans", sans-serif; white-space: pre; }
.scale text { fill: #e4e4e4; font: 6px "Liberation Sans", sans-serif; }
.scale .k { fill: #111; }
.ctabs { height: 13px; flex: none; display: flex; align-items: center; background: #f0f0f0; border-top: 1px solid #aaa; color: #7c7c7c; padding-left: 2px; overflow: hidden; }
.ctabs button { padding: 0 6px; height: 7px; border-right: 1px solid #999; flex: none; }
.ctabs .cut { border: 0; padding-right: 0; }
.scr { display: flex; gap: 6px; padding: 0 4px; color: #888; margin-left: auto; }
.scr b { color: #000; }

.terminal { height: 55px; display: flex; border-top: 1px solid #ccc; }
.vstrip { width: 9px; display: flex; flex-direction: column; align-items: center; }
.vstrip button { height: 9px; color: #000; font-size: 9px; }
.vstrip span { flex: 1; width: 8px; writing-mode: vertical-rl; transform: rotate(180deg); line-height: 8px; color: #54697d; background: #cfdeec; padding-top: 2px; }
.tmain { flex: 1; min-width: 0; display: flex; flex-direction: column; border-left: 1px solid #999; background: #fff; margin-top: 2px; }
.tmain th, .tmain td { text-align: right; padding-right: 3px; }
.tmain th { height: 14px; border-right: 1px solid #eee; }
.tmain .l { text-align: left; padding-left: 3px; }
.slash { color: #777; padding-left: 3px; }
.tmain tbody { background: #c6c6c6; }
.tmain td { height: 11px; font-weight: 600; font-family: "Open Sans", sans-serif; }
.dot { display: inline-block; width: 4px; height: 4px; border: 1px solid #888; border-radius: 2px; margin-right: 5px; }
.c1 { width: 62px; } .c2 { width: 88px; } .c3 { width: 43px; } .c4 { width: 33px; } .c5 { width: 44px; } .c6 { width: 48px; }
.ttabs { margin-top: auto; height: 15px; display: flex; align-items: flex-start; background: #f0f0f0; border-top: 1px solid #555; color: #808080; }
.ttabs button { height: 8px; margin-top: 2px; padding: 0 5px; border-right: 1px solid #999; }
.ttabs sub { color: #f22; font-size: 5px; line-height: 5px; font-weight: 700; align-self: flex-end; }
.ttabs .act { height: 12px; padding: 0 6px; margin: -1px 0 0 0; background: #fff; color: #000; border: 1px solid #333; border-top: 0; font-weight: 600; }
.frames { width: 154px; margin-left: 2px; border-left: 1px solid #aaa; }
.frow { height: 14px; display: flex; align-items: center; border-bottom: 1px solid #ccc; color: #666; padding-left: 2px; font-size: 6px; }
.frow button { flex: 1; height: 12px; }
.frow .on { background: #fafafa; border: 1px solid #c4c4c4; }

.status { height: 14px; display: flex; align-items: stretch; border-top: 1px solid #bbb; line-height: 12px; }
.status span { border-right: 1px solid #bbb; margin: 1px 0; }
.status .help { flex: 1; padding-left: 1px; }
.status .s1 { width: 67px; padding-left: 3px; white-space: nowrap; }
.status .s2 { width: 60px; }
.status .s3 { width: 41px; }
.status .conn { width: 74px; border: 0; display: flex; align-items: center; gap: 2px; padding-left: 2px; }
.conn svg { width: 14px; height: 8px; }

.taskbar { height: 23px; display: flex; align-items: center; color: #fff; border-top: 1px solid #8a7068; background: linear-gradient(100deg, #4a2119 0, #55281e 250px, #6b3a29 300px, #8a4a30 320px, #8a5a40 370px, #a3704f 400px, #9c6a4b 430px, #514463 490px, #5c4a62 560px, #a88255 580px, #a37c55 610px, #6c4a3c 650px, #40292a 700px, #3b2628 100%); }
.orb { width: 31px; }
.orb svg { width: 22px; height: 22px; }
.task { width: 33px; height: 22px; margin-left: 4px; border: 1px solid #a48e85; border-radius: 2px; background: linear-gradient(135deg, #a58f86, #5f3f36 60%); }
.task svg { width: 19px; height: 19px; }
.task.plain { border: 0; background: none; margin-left: 3px; }
.task.lit { background: linear-gradient(135deg, #ddd2cc, #a58c80); }
.word { width: 16px; height: 16px; background: #2b5db4; color: #fff; font-weight: 700; font-size: 13px; line-height: 16px; border-right: 3px solid #dfe8f6; }
.tray { margin-left: auto; height: 100%; display: flex; align-items: center; gap: 5px; }
.tray svg { width: 5px; height: 5px; }
.tray .t { width: 10px; height: 10px; }
.lang { margin-right: 5px; }
.clock { width: 44px; text-align: center; line-height: 10px; }
.desk { width: 8px; height: 100%; border: 1px solid #8b7a78; background: #5a4444; }

/* Modal window floating over the chart */
.dialog { position: absolute; left: 111px; top: 41px; width: 286px; height: 184px; padding: 0 5px 5px; display: flex; flex-direction: column; border: 1px solid #222; outline: 1px solid #8b8b8b; outline-offset: -2px; border-radius: 4px; background: linear-gradient(90deg, #777 0, #333 100px, #0c0c0c 180px, #222 100%); box-shadow: 0 0 3px #000; }
.dhead { height: 17px; display: flex; align-items: center; flex: none; }
.dhead .ic { width: 10px; height: 10px; margin-right: 2px; }
.dhead h2 { flex: 1; color: #000; font-family: "Open Sans", sans-serif; background: linear-gradient(90deg, #858585, #929292 90%, transparent); line-height: 11px; border-radius: 5px; padding-left: 1px; max-width: 138px; text-shadow: 0 0 3px #bbb; }
.dhead button { height: 11px; align-self: flex-start; margin-top: 1px; border: 1px solid #999; color: #fff; font-weight: 700; }
.q { width: 18px; margin-left: auto; background: linear-gradient(#888, #444); }
.dx { width: 26px; background: linear-gradient(#d98a80, #b02a1c 50%, #c7412d); }
.dbody { flex: 1; min-height: 0; display: flex; gap: 5px; padding: 5px 4px; background: #f0f0f0; border: 1px solid #fff; }
.tree { flex: 1; background: linear-gradient(#bbb, #bbb) 7px 6px / 1px 94px no-repeat #fff; border: 1px solid #828790; height: 151px; padding: 1px 0 22px 5px; display: grid; grid-auto-rows: 1fr; }
.tree li { padding-left: 22px; }
.tree li::before { content: ""; width: 6px; height: 100%; margin-left: -10px; margin-right: -2px; background: linear-gradient(#bbb, #bbb) 0 0 / 1px 100% no-repeat, linear-gradient(#bbb, #bbb) 0 50% / 6px 1px no-repeat; }
.tree .last::before { background-size: 1px 50%, 6px 1px; }
.tree .root { padding-left: 0; }
.tree .root::before { display: none; }
.dbtns { width: 55px; display: flex; flex-direction: column; gap: 4px; height: 151px; }
.dbtns button { height: 13px; border: 1px solid #8a8a8a; border-radius: 2px; background: linear-gradient(#f4f4f4, #dedede); }
.dbtns button:disabled { color: #8c8c8c; border-color: #bbb; background: #f4f4f4; }
.dbtns .def { margin-top: auto; border-color: #3c7fb1; background: linear-gradient(#e6f5fd, #a9daf3); }
```
FILE: chart.js
```js
// Draws the price chart and its three indicator panes.
var NS = 'http://www.w3.org/2000/svg';
var grid = document.getElementById('grid'), plot = document.getElementById('plot'), scale = document.getElementById('scale');
function add(parent, tag, attrs, text) {
  var e = document.createElementNS(NS, tag);
  for (var k in attrs) e.setAttribute(k, attrs[k]);
  if (text) e.textContent = text;
  parent.appendChild(e);
}
function line(x1, y1, x2, y2, c, w, dash) {
  add(plot, 'path', { d: 'M' + x1 + ' ' + y1 + 'L' + x2 + ' ' + y2, stroke: c, 'stroke-width': w || 1, 'stroke-dasharray': dash || 'none', fill: 'none' });
}
function rect(p, x, y, w, h, c, s) { add(p, 'rect', { x: x, y: y, width: w, height: h, fill: c, stroke: s || 'none', 'stroke-width': s ? 0.8 : 0 }); }
function bx(i) { return 112.3 + i * 4.6875; }

rect(grid, 111, 41, 689, 304, '#000');
for (var k = 0; k < 36; k++) {
  add(grid, 'path', { d: 'M' + (112.5 + k * 18.75) + ' 44V332', stroke: '#465563', 'stroke-width': 1, 'stroke-dasharray': '2 2' });
}
[53, 80.5, 108.5, 135.5, 163.5, 190.5].forEach(function (y) {
  add(grid, 'path', { d: 'M112 ' + y + 'H775', stroke: '#465563', 'stroke-dasharray': '2 2' });
});
add(grid, 'path', { d: 'M529.5 44V332', stroke: '#b0b0b0', 'stroke-dasharray': '2 2' });

// Price levels
line(112, 130.5, 800, 130.5, '#c00000', 1);
line(112, 133.5, 775, 133.5, '#55626c', 1);
line(112, 218.5, 775, 218.5, '#a89f4c', 1, '8 2 2 2');

// Candles: high, body top, body bottom, low, filled
var candles = [[140,145,200,215,1],[165,172,192,200,0],[98,110,170,185,0],[50,72,105,130,0],[72,77,157,170,1],[155,160,180,190,1],[178,180,198,205,1],[180,187,227,235,1],[215,216,222,225,0],[180,185,210,235,0],[165,172,178,205,1],[168,174,178,182,1],[170,174,178,182,1],[170,174,178,182,1],[165,172,178,185,1],[155,160,170,175,0],[145,150,155,165,0],[145,150,155,165,0],[160,163,205,210,1],[180,186,210,215,0],[170,182,186,200,1],[165,174,182,200,1],[170,172,180,190,0],[170,182,186,198,1],[165,182,198,205,1],[170,182,198,200,0],[172,178,200,210,1],[170,180,200,210,0],[165,182,185,200,0],[178,185,195,200,1],[185,203,208,212,1],[185,198,210,215,0],[178,184,190,205,0],[168,182,185,190,0],[172,180,183,190,0],[172,176,184,188,0],[175,183,186,190,1],[175,182,186,195,0],[172,178,184,190,1],[178,182,192,200,1],[178,188,192,210,0],[150,158,185,190,0],[135,140,155,165,0],[115,144,152,155,1],[150,160,182,190,1],[178,183,188,205,0],[182,188,200,210,1],[165,192,196,200,0],[190,195,222,225,1],[210,214,226,228,0],[218,222,226,232,0]];
candles.forEach(function (c, n) {
  var x = bx(61 + n);
  line(x, 60 + c[0] / 3, x, 60 + c[3] / 3, '#00b400', 1);
  rect(plot, x - 1.4, 60 + c[1] / 3, 2.8, Math.max(1.2, (c[2] - c[1]) / 3), c[4] ? '#fff' : '#000', '#00d400');
});
line(397, 109, 431, 109, '#087a20', 4);
line(397, 109.5, 431, 109.5, '#1020d0', 1);
var trend = '431,109.5 435,112.3 534,112.3 538,115 549,115.5 552,117 623,117 633,126';
add(plot, 'polyline', { points: trend, fill: 'none', stroke: '#ff1838', 'stroke-width': 4.5, 'stroke-linecap': 'round', 'stroke-linejoin': 'round' });
add(plot, 'polyline', { points: trend, fill: 'none', stroke: '#ff8030', 'stroke-width': 1 });
add(plot, 'circle', { cx: 435.5, cy: 97.5, r: 3.6, fill: 'none', stroke: '#ffa500', 'stroke-width': 1.6 });
add(plot, 'path', { d: 'M435.500 94v5M433.500 97.500l2 2 2-2', fill: 'none', stroke: '#ffa500', 'stroke-width': 1.2 });
add(plot, 'circle', { cx: 440.3, cy: 154, r: 2.3, fill: '#0000ff' });

// Colour strip, one bar per candle
for (var i = 0; i < 112; i++) {
  var yellow = i === 61 || i === 66 || (i > 69 && i < 74) || (i > 74 && i < 78) || (i > 101 && i < 105);
  rect(plot, bx(i) - 2.3, 229.5, 4.7, 10, i < 67 || yellow ? (yellow ? '#ffff00' : '#0000ff') : '#ff0000');
  if (i) line(bx(i) - 2.3, 229.5, bx(i) - 2.3, 239.5, yellow ? '#807000' : i < 67 ? '#000080' : '#800000', 0.8);
}

// Linear interpolation over [x, y] knots
function at(pts, x) {
  for (var j = 1; j < pts.length; j++) if (x <= pts[j][0]) {
    var a = pts[j - 1], b = pts[j];
    return a[1] + (b[1] - a[1]) * (x - a[0]) / (b[0] - a[0]);
  }
  return pts[pts.length - 1][1];
}
function join(left, right) {
  return left.map(function (p) { return [105 + p[0] / 3, 225 + p[1] / 3]; }).concat(right.map(function (p) { return [450 + p[0] / 3, 225 + p[1] / 3]; }));
}
function curve(pts, c, w, top) {
  add(plot, 'polyline', { points: pts.map(function (p) { return p[0].toFixed(1) + ',' + Math.max(top, p[1]).toFixed(1); }).join(' '), fill: 'none', stroke: c, 'stroke-width': w, 'stroke-linejoin': 'round' });
}
[243.5, 252.5, 269.5, 278.5, 286.5, 293.5, 321.5, 328.5].forEach(function (y) { line(112, y, 775, y, '#9c8000', 1, '2 2'); });
line(112, 260.5, 775, 260.5, '#465563', 1, '2 2');
line(112, 307.5, 775, 307.5, '#465563', 1, '2 2');
line(112, 300.5, 775, 300.5, '#b03080', 1);
line(112, 314.5, 775, 314.5, '#30a030', 1);

var cci = join([[22,95],[64,88],[80,83],[120,88],[150,75],[180,60],[200,50],[250,60],[280,75],[300,72],[330,80],[360,75],[390,80],[418,88],[440,72],[470,78],[530,65],[560,78],[600,60],[640,70],[680,90],[725,97],[760,80],[800,82],[830,88],[870,95],[900,104],[922,85],[950,112],[985,125],[1010,115]], [[0,112],[70,115],[90,128],[110,132],[140,125],[200,128],[235,128],[270,132],[290,122],[330,117],[380,120],[410,118],[430,100],[450,85],[462,104],[480,115],[500,122],[520,143],[548,157]]);
var small = join([[22,240],[80,215],[140,205],[200,195],[260,218],[330,230],[415,245],[470,220],[530,210],[600,215],[640,232],[680,246],[760,246],[800,236],[870,250],[922,240],[990,268]], [[0,258],[90,258],[270,264],[330,246],[390,240],[437,205],[470,240],[500,262],[548,296]]);
for (i = 0; i < 112; i++) {
  var x = bx(i), y = at(cci, x), z = at(small, x);
  line(x, 260.7, x, y, y < 260.7 ? '#008a00' : '#ff5a10', y < 260.7 ? 1.3 : 2);
  line(x, 307.3, x, z, z < 307.3 ? '#006c00' : '#b82800', 1.2);
}
curve(cci, '#20205c', 1, 241);
line(112, 260.5, 418, 260.5, '#00a800', 1.6);
line(440, 260.5, 604, 260.5, '#00a800', 1.6);
line(530, 260.5, 545, 260.5, '#c00000', 1.6);
line(606, 260.5, 634, 260.5, '#c00000', 1.6);
line(112, 307, 427, 307, '#00d800', 2);
[[441,472],[487,516],[525,530],[549,615]].forEach(function (s) { line(s[0], 307, s[1], 307, '#00d800', 2); });
[[431,437],[534,544],[612,633]].forEach(function (s) { line(s[0], 307, s[1], 307, '#e00000', 2); });
curve(small, '#18188c', 1, 283);
curve(join([[22,258],[60,225],[110,190],[130,215],[180,205],[250,225],[340,238],[400,240],[420,250],[445,190],[470,205],[500,185],[520,205],[560,222],[600,212],[640,235],[680,245],[720,265],[770,230],[800,235],[825,258],[850,240],[880,275],[905,245],[922,228],[940,258],[985,280]], [[0,262],[60,242],[75,250],[80,262],[130,260],[240,262],[268,280],[300,255],[330,240],[360,245],[380,222],[400,255],[415,210],[437,182],[455,215],[480,250],[520,280],[548,290]]), '#56787c', 0.9, 283);
curve(join([[22,247],[80,222],[120,195],[180,175],[260,200],[320,210],[360,222],[420,245],[460,225],[520,195],[560,185],[620,195],[660,225],[700,247],[750,256],[800,240],[850,245],[900,260],[940,252],[1000,266]], [[0,260],[90,250],[120,255],[250,260],[300,258],[360,245],[420,240],[450,222],[480,238],[510,260],[548,268]]), '#c80000', 1.1, 283);
curve(join([[22,247],[50,225],[80,205],[110,190],[140,185],[180,172],[230,172],[250,190],[300,192],[340,215],[380,232],[415,245],[450,220],[490,190],[530,181],[570,188],[610,185],[640,205],[670,243],[700,252],[730,262],[765,248],[800,236],[840,246],[870,262],[900,265],[930,250],[960,262],[990,268]], [[0,258],[40,253],[75,240],[110,254],[150,253],[200,257],[240,256],[290,258],[330,243],[400,244],[430,222],[460,225],[490,250],[520,270],[548,285]]), '#0808ff', 1.6, 283);
[[398,308.500],[421,308],[590,306],[581,309],[609,308.500],[422,262]].forEach(function (p) { rect(plot, p[0] - 1.5, p[1] - 1.5, 3, 3, '#ffff00'); });
line(435.7, 43, 435.7, 332, '#8a7466', 1.6);
line(604.3, 43, 604.3, 332, '#a58c74', 1);
add(plot, 'circle', { cx: 604.3, cy: 108.5, r: 2.2, fill: '#dc143c' });

// Price scale and time scale
function label(x, y, t, cls) { add(scale, 'text', { x: x, y: y, 'class': cls || '' }, t); }
[['1.4225',55],['1.4210',83],['1.4195',110.500],['1.4165',165.500],['1.4150',193]].forEach(function (p) { line(775, p[1] - 2.5, 777, p[1] - 2.5, '#aaa'); label(778, p[1], p[0]); });
rect(scale, 776, 127, 21, 4, '#ff0000');
rect(scale, 776, 131, 21, 6, '#ffffff'); label(778, 136, '1.4181', 'k');
rect(scale, 776, 215, 21, 6, '#f0e68c'); label(778, 220, '1.4135', 'k');
label(778, 234, '1.05'); label(778, 239, '-0.05');
label(777, 246, '200'); label(777, 255, '100'); label(777, 263, '0.00'); label(777, 272, '-100'); label(777, 280, '-200');
label(777, 288, '350'); label(777, 295, '200'); label(777, 309, '0.00'); label(777, 324, '-200'); label(777, 331, '-350');
rect(scale, 776, 297, 24, 6, '#ff1493'); label(777, 302, '100.0000', 'k');
rect(scale, 776, 311, 24, 6, '#32cd32'); label(777, 316, '-100.000', 'k');
['18 May 2021','18 May 03:45','18 May 05:45','18 May 07:45','18 May 09:45','18 May 11:45','18 May 13:45','18 May 15:45'].forEach(function (t, n) { label(112 + n * 37.5, 340, t); });
rect(scale, 412, 334, 46, 8, '#ffe4c4'); label(413, 340, '2021.05.18 19:00', 'k');
label(460, 340, 'May 19:45'); label(487, 340, '18 May 21:45'); label(524.5, 340, '18 May 23:45'); label(562, 340, '19 May');
rect(scale, 581, 334, 46, 8, '#ffe4c4'); label(582, 340, '2021.05.19 04:00', 'k');
label(628, 340, '45');
```
